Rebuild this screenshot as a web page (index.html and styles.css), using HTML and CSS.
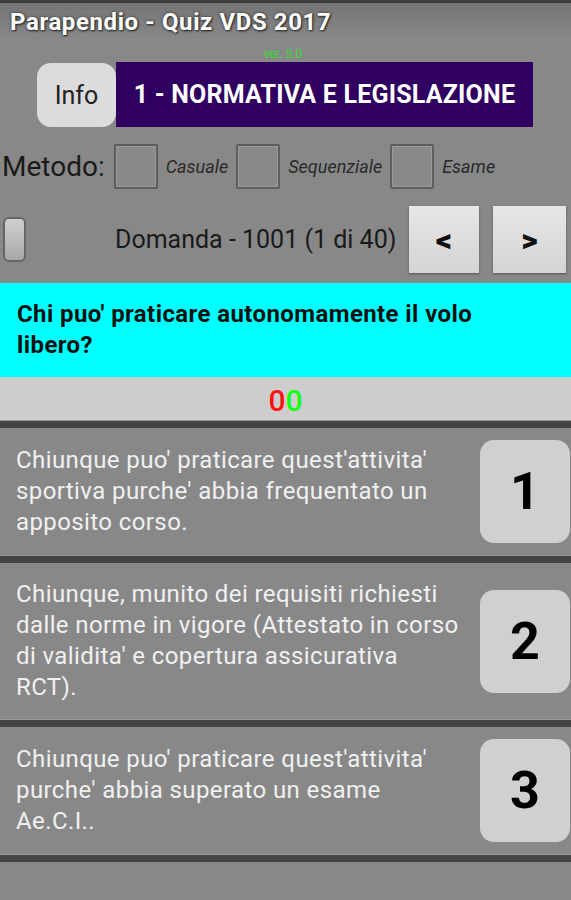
FILE: index.html
```html
<!DOCTYPE html>
<html lang="it">
<head>
<meta charset="utf-8">
<title>Parapendio - Quiz VDS 2017</title>
<link rel="stylesheet" href="styles.css">
</head>
<body>
<div class="app">
  <div class="statusbar"></div>
  <div class="titlebar">Parapendio - Quiz VDS 2017</div>
  <div class="ver">ver. 5.0</div>
  <div class="header">
    <div class="info-btn">Info</div>
    <div class="banner">1 - NORMATIVA E LEGISLAZIONE</div>
  </div>
  <div class="method">
    <span class="method-label">Metodo:</span>
    <span class="check"></span><span class="opt">Casuale</span>
    <span class="check"></span><span class="opt">Sequenziale</span>
    <span class="check"></span><span class="opt">Esame</span>
  </div>
  <div class="nav">
    <span class="toggle"></span>
    <span class="domanda">Domanda - 1001 (1 di 40)</span>
    <span class="nav-btn prev">&lt;</span>
    <span class="nav-btn next">&gt;</span>
  </div>
  <div class="question">Chi puo' praticare autonomamente il volo libero?</div>
  <div class="score"><span class="red">0</span><span class="green">0</span></div>
  <div class="sep"></div>
  <div class="answer">
    <div class="answer-text">Chiunque puo' praticare quest'attivita'<br>sportiva purche' abbia frequentato un<br>apposito corso.</div>
    <div class="answer-btn">1</div>
  </div>
  <div class="sep"></div>
  <div class="answer">
    <div class="answer-text">Chiunque, munito dei requisiti richiesti<br>dalle norme in vigore (Attestato in corso<br>di validita' e copertura assicurativa<br>RCT).</div>
    <div class="answer-btn">2</div>
  </div>
  <div class="sep"></div>
  <div class="answer">
    <div class="answer-text">Chiunque puo' praticare quest'attivita'<br>purche' abbia superato un esame<br>Ae.C.I..</div>
    <div class="answer-btn">3</div>
  </div>
  <div class="sep"></div>
</div>
</body>
</html>
```
FILE: styles.css
```css
html, body {
  margin: 0;
  padding: 0;
  background: #888888;
}
body {
  font-family: Roboto, "Liberation Sans", sans-serif;
}
.app {
  width: 571px;
  height: 900px;
  overflow: hidden;
  background: #888888;
}
.statusbar {
  height: 3px;
  background: #3c3c3c;
}
.titlebar {
  height: 39px;
  box-sizing: border-box;
  padding-left: 10px;
  padding-top: 5px;
  font-size: 24px;
  font-weight: 700;
  letter-spacing: 0.6px;
  color: #ffffff;
  line-height: 28px;
  text-shadow: 0 0 3px #333, 1px 1px 2px #222;
  background: linear-gradient(#747474, #8a8a8a);
}
.ver {
  height: 16px;
  padding-top: 4px;
  padding-left: 264px;
  font-size: 12px;
  line-height: 16px;
  color: #33dd33;
}
.header {
  display: flex;
  height: 65px;
  margin-left: 37px;
}
.info-btn {
  width: 79px;
  height: 64px;
  margin-top: 1px;
  background: #dcdcdc;
  border-radius: 14px;
  display: flex;
  align-items: center;
  justify-content: center;
  font-size: 25px;
  color: #222;
}
.banner {
  width: 417px;
  background: #300060;
  color: #ffffff;
  font-weight: 700;
  font-size: 25px;
  letter-spacing: 0.2px;
  display: flex;
  align-items: center;
  justify-content: center;
}
.method {
  display: flex;
  align-items: center;
  height: 45px;
  margin-top: 17px;
  padding-left: 2px;
}
.method-label {
  font-size: 28px;
  color: #1a1a1a;
  margin-right: 9px;
}
.check {
  width: 40px;
  height: 41px;
  border: 2px solid #5e5e5e;
  box-shadow: inset 0 0 0 1px #9a9a9a;
  background: #8a8a8a;
  border-radius: 2px;
}
.opt {
  font-style: italic;
  font-size: 18px;
  color: #2a2a2a;
  margin-left: 8px;
  margin-right: 8px;
}
.nav {
  display: flex;
  align-items: center;
  height: 67px;
  margin-top: 17px;
  padding-left: 3px;
  padding-right: 5px;
}
.toggle {
  width: 19px;
  height: 41px;
  border: 2px solid #666;
  border-radius: 6px;
  background: linear-gradient(#d0d0d0, #a8a8a8);
}
.domanda {
  flex: 1;
  font-size: 25px;
  color: #1a1a1a;
  margin-left: 89px;
  white-space: nowrap;
}
.nav-btn {
  height: 67px;
  background: linear-gradient(#e6e6e6, #d4d4d4);
  box-shadow: 0 1px 2px #555;
  display: flex;
  align-items: center;
  justify-content: center;
  font-size: 32px;
  font-weight: 900;
  color: #111;
}
.prev {
  width: 70px;
}
.next {
  width: 73px;
  margin-left: 14px;
}
.question {
  margin-top: 10px;
  height: 94px;
  box-sizing: border-box;
  background: #00ffff;
  padding: 16px 60px 0 17px;
  font-size: 24px;
  font-weight: 700;
  letter-spacing: 0.4px;
  line-height: 31px;
  color: #111;
}
.score {
  height: 43px;
  background: #cdcdcd;
  text-align: center;
  font-size: 30px;
  font-weight: 500;
  line-height: 47px;
}
.red { color: #ff1111; }
.green { color: #11ff11; }
.sep {
  height: 7px;
  background: #444444;
  border-top: 1px solid #9a9a9a;
}
.answer {
  display: flex;
  align-items: center;
}
.answer-text {
  flex: 1;
  padding: 16px 4px 16px 16px;
  font-size: 24px;
  letter-spacing: 0.4px;
  line-height: 31px;
  color: #f0f0f0;
  white-space: nowrap;
}
.answer-btn {
  width: 90px;
  height: 103px;
  margin: 12px 1px 12px 0;
  background: #d0d0d0;
  border-radius: 14px;
  display: flex;
  align-items: center;
  justify-content: center;
  font-size: 52px;
  font-weight: 700;
  color: #000;
}
```
